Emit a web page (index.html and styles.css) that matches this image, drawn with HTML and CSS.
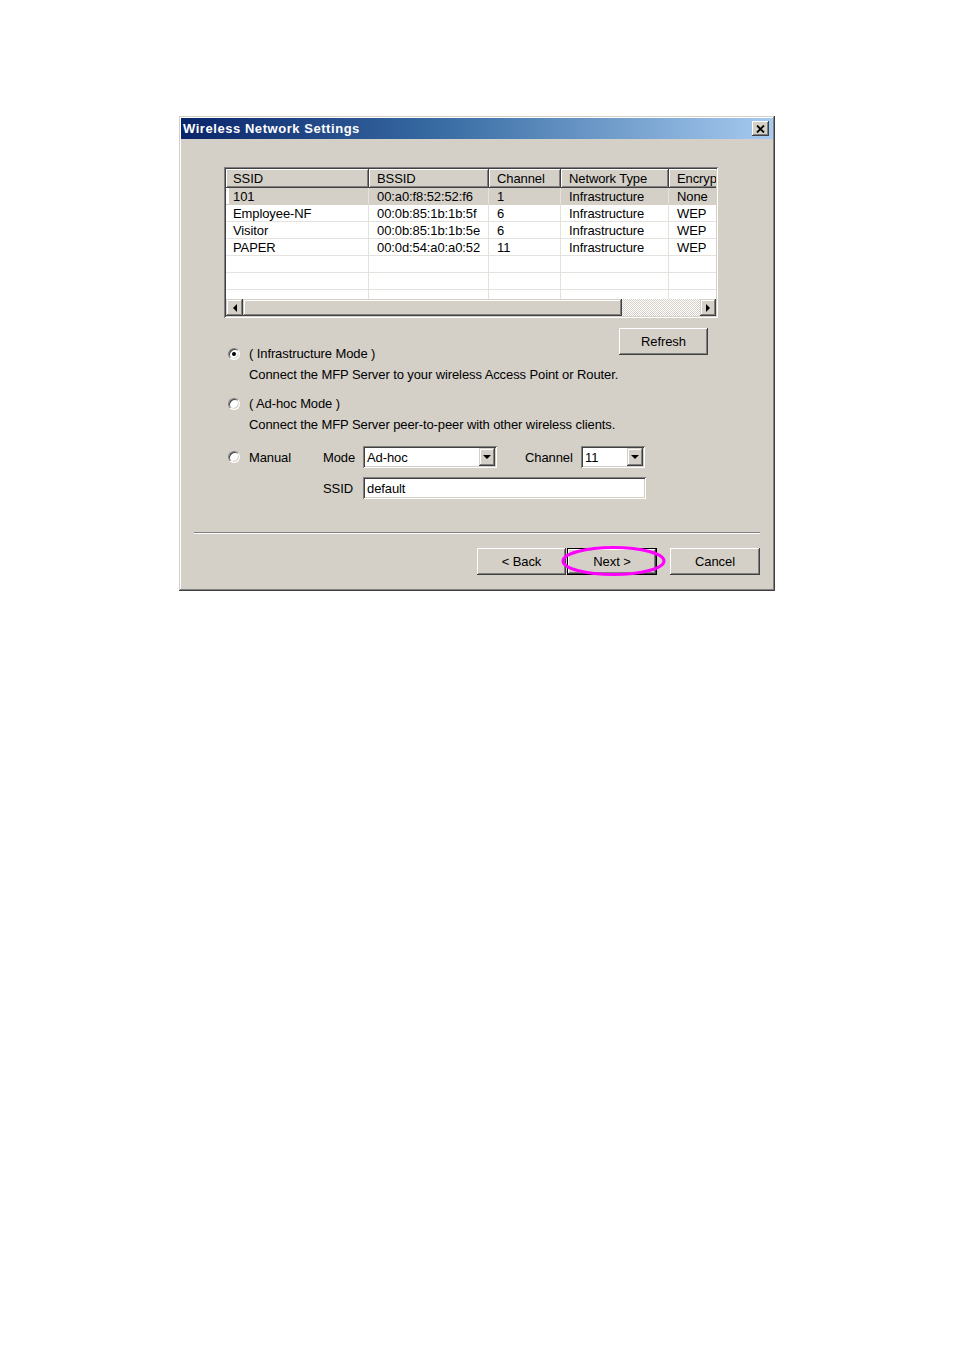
FILE: index.html
```html
<!DOCTYPE html>
<html>
<head>
<meta charset="utf-8">
<title>Wireless Network Settings</title>
<link rel="stylesheet" href="styles.css">
</head>
<body>
<div class="dialog">
  <div class="titlebar">
    <span class="title">Wireless Network Settings</span>
    <span class="close">
      <svg width="9" height="8" viewBox="0 0 9 8"><path d="M1 0.5 L8 7.5 M8 0.5 L1 7.5" stroke="#000" stroke-width="1.8" fill="none"/></svg>
    </span>
  </div>
  <div class="body">
    <div class="list">
      <div class="row head">
        <div class="c c1">SSID</div><div class="c c2">BSSID</div><div class="c c3">Channel</div><div class="c c4">Network Type</div><div class="c c5">Encryp</div>
      </div>
      <div class="rows">
        <div class="row sel"><div class="c c1">101</div><div class="c c2">00:a0:f8:52:52:f6</div><div class="c c3">1</div><div class="c c4">Infrastructure</div><div class="c c5">None</div></div>
        <div class="row"><div class="c c1">Employee-NF</div><div class="c c2">00:0b:85:1b:1b:5f</div><div class="c c3">6</div><div class="c c4">Infrastructure</div><div class="c c5">WEP</div></div>
        <div class="row"><div class="c c1">Visitor</div><div class="c c2">00:0b:85:1b:1b:5e</div><div class="c c3">6</div><div class="c c4">Infrastructure</div><div class="c c5">WEP</div></div>
        <div class="row"><div class="c c1">PAPER</div><div class="c c2">00:0d:54:a0:a0:52</div><div class="c c3">11</div><div class="c c4">Infrastructure</div><div class="c c5">WEP</div></div>
        <div class="row"><div class="c c1"></div><div class="c c2"></div><div class="c c3"></div><div class="c c4"></div><div class="c c5"></div></div>
        <div class="row"><div class="c c1"></div><div class="c c2"></div><div class="c c3"></div><div class="c c4"></div><div class="c c5"></div></div>
        <div class="row"><div class="c c1"></div><div class="c c2"></div><div class="c c3"></div><div class="c c4"></div><div class="c c5"></div></div>
      </div>
      <div class="hscroll">
        <div class="sbtn"><span class="tri-left"></span></div>
        <div class="thumb"></div>
        <div class="track"></div>
        <div class="sbtn"><span class="tri-right"></span></div>
      </div>
    </div>

    <div class="mid-row">
      <div class="opt first">
        <div class="radio-line"><span class="radio checked"></span><span>( Infrastructure Mode )</span></div>
        <div class="desc">Connect the MFP Server to your wireless Access Point or Router.</div>
      </div>
      <div class="btn refresh">Refresh</div>
    </div>

    <div class="opt second">
      <div class="radio-line"><span class="radio"></span><span>( Ad-hoc Mode )</span></div>
      <div class="desc">Connect the MFP Server peer-to-peer with other wireless clients.</div>
    </div>

    <div class="manual-row">
      <div class="radio-line manual"><span class="radio"></span><span>Manual</span></div>
      <span class="lbl">Mode</span>
      <div class="combo mode"><span class="val">Ad-hoc</span><span class="dd"><span class="tri-down"></span></span></div>
      <span class="lbl chan">Channel</span>
      <div class="combo chanbox"><span class="val">11</span><span class="dd"><span class="tri-down"></span></span></div>
    </div>
    <div class="ssid-row">
      <span class="lbl">SSID</span>
      <div class="input"><span class="val">default</span></div>
    </div>

    <div class="sep"></div>

    <div class="buttons">
      <div class="btn back">&lt; Back</div>
      <div class="btn next default">Next &gt;
        <svg class="circle" width="105" height="32" viewBox="0 0 105 32"><ellipse cx="52.5" cy="16" rx="50.5" ry="13.5" fill="none" stroke="#ff00ff" stroke-width="3"/></svg>
      </div>
      <div class="btn cancel">Cancel</div>
    </div>
  </div>
</div>
</body>
</html>
```

FILE: styles.css
```css
* { box-sizing: border-box; }
html, body { margin: 0; padding: 0; background: #fff; }
body {
  font-family: "Liberation Sans", Arial, sans-serif;
  font-size: 13px;
  letter-spacing: -0.1px;
  color: #000;
}
.dialog {
  width: 596px;
  height: 475px;
  margin: 116px 0 0 179px;
  padding: 2px;
  background: #d4d0c8;
  box-shadow: inset -1px -1px #404040, inset 1px 1px #d4d0c8, inset -2px -2px #808080, inset 2px 2px #ffffff;
}
.titlebar {
  height: 21px;
  background: linear-gradient(to right, #0a246a 0%, #3a6ea5 45%, #a6caf0 100%);
  display: flex;
  align-items: center;
  justify-content: space-between;
  padding: 0 4px 0 2px;
}
.title {
  color: #fff;
  font-weight: bold;
  font-size: 13px;
  letter-spacing: 0.55px;
  line-height: 21px;
}
.close {
  width: 17px;
  height: 15px;
  background: #d4d0c8;
  box-shadow: inset -1px -1px #404040, inset 1px 1px #ffffff, inset -2px -2px #808080;
  display: flex;
  align-items: center;
  justify-content: center;
}
.body {
  padding: 28px 0 0 43px;
}
.list {
  width: 494px;
  height: 151px;
  padding: 2px;
  background: #fff;
  box-shadow: inset 1px 1px #808080, inset -1px -1px #ffffff, inset 2px 2px #404040, inset -2px -2px #d4d0c8;
  display: flex;
  flex-direction: column;
  overflow: hidden;
}
.row {
  display: flex;
  height: 17px;
  line-height: 17px;
  white-space: nowrap;
  flex: none;
}
.c {
  flex: none;
  padding-left: 7px;
  overflow: hidden;
  border-right: 1px solid #e4e2dc;
  border-bottom: 1px solid #e4e2dc;
}
.c1 { width: 143px; }
.c2 { width: 120px; padding-left: 8px; }
.c3 { width: 72px; padding-left: 8px; }
.c4 { width: 108px; padding-left: 8px; }
.c5 { width: 60px; padding-left: 8px; border-right: none; }
.row.head { height: 19px; line-height: 20px; width: 490px; overflow: hidden; }
.row.head .c {
  background: #d4d0c8;
  border: none;
  box-shadow: inset -1px -1px #404040, inset 1px 1px #ffffff, inset -2px -2px #808080;
}
.rows { height: 111px; overflow: hidden; flex: none; }
.row.sel .c { background: #d4d0c8; border-bottom-color: #d4d0c8; }
.row.sel .c1 { box-shadow: inset 3px 0 #fff; }
.hscroll {
  height: 17px;
  display: flex;
  flex: none;
}
.sbtn {
  width: 17px;
  height: 17px;
  background: #d4d0c8;
  box-shadow: inset -1px -1px #404040, inset 1px 1px #d4d0c8, inset -2px -2px #808080, inset 2px 2px #ffffff;
  display: flex;
  align-items: center;
  justify-content: center;
  flex: none;
}
.sbtn:last-child { width: 16px; }
.thumb {
  width: 379px;
  height: 17px;
  background: #d4d0c8;
  box-shadow: inset -1px -1px #404040, inset 1px 1px #d4d0c8, inset -2px -2px #808080, inset 2px 2px #ffffff;
  flex: none;
}
.track {
  flex: 1;
  height: 17px;
  background: repeating-conic-gradient(#d4d0c8 0 25%, #ffffff 0 50%) 0 0 / 2px 2px;
}
.tri-left {
  width: 0; height: 0;
  border-top: 4px solid transparent;
  border-bottom: 4px solid transparent;
  border-right: 4px solid #000;
}
.tri-right {
  width: 0; height: 0;
  border-top: 4px solid transparent;
  border-bottom: 4px solid transparent;
  border-left: 4px solid #000;
}
.tri-down {
  width: 0; height: 0;
  border-left: 4px solid transparent;
  border-right: 4px solid transparent;
  border-top: 4px solid #000;
}
.mid-row {
  width: 484px;
  margin-top: 10px;
  display: flex;
  align-items: flex-start;
}
.btn {
  height: 27px;
  background: #d4d0c8;
  box-shadow: inset -1px -1px #404040, inset 1px 1px #ffffff, inset -2px -2px #808080;
  display: flex;
  align-items: center;
  justify-content: center;
  flex: none;
  position: relative;
}
.refresh { width: 89px; margin-left: auto; }
.opt { margin-left: 4px; }
.opt.first { padding-top: 17px; flex: 1; min-width: 0; }
.opt.second { margin-top: 12px; }
.radio-line {
  display: flex;
  align-items: center;
  height: 17px;
  line-height: 17px;
  white-space: nowrap;
}
.radio {
  width: 12px;
  height: 12px;
  border-radius: 50%;
  border: 1px solid;
  border-color: #808080 #ffffff #ffffff #808080;
  box-shadow: inset 1px 1px #404040, inset -1px -1px #d4d0c8;
  background: #fff;
  margin-right: 9px;
  position: relative;
  flex: none;
}
.radio.checked::after {
  content: "";
  position: absolute;
  left: 3px;
  top: 3px;
  width: 4px;
  height: 4px;
  border-radius: 50%;
  background: #000;
}
.desc {
  margin-left: 21px;
  margin-top: 4px;
  line-height: 17px;
  height: 17px;
  white-space: nowrap;
}
.manual-row {
  margin-top: 13px;
  margin-left: 4px;
  display: flex;
  align-items: center;
  height: 22px;
}
.radio-line.manual { width: 95px; }
.lbl { width: 40px; flex: none; }
.lbl.chan { width: 56px; margin-left: 28px; }
.combo, .input {
  height: 22px;
  background: #fff;
  box-shadow: inset 1px 1px #808080, inset -1px -1px #ffffff, inset 2px 2px #404040, inset -2px -2px #d4d0c8;
  display: flex;
  align-items: center;
  padding: 2px;
  flex: none;
}
.combo.mode { width: 134px; }
.combo.chanbox { width: 64px; }
.val { flex: 1; padding-left: 2px; line-height: 19px; height: 18px; }
.dd {
  width: 16px;
  height: 18px;
  background: #d4d0c8;
  box-shadow: inset -1px -1px #404040, inset 1px 1px #d4d0c8, inset -2px -2px #808080, inset 2px 2px #ffffff;
  display: flex;
  align-items: center;
  justify-content: center;
}
.ssid-row {
  margin-top: 9px;
  margin-left: 99px;
  display: flex;
  align-items: center;
}
.input { width: 283px; }
.sep {
  margin: 33px 13px 0 -30px;
  height: 2px;
  border-top: 1px solid #808080;
  border-bottom: 1px solid #ffffff;
}
.buttons {
  margin-top: 14px;
  margin-right: 13px;
  display: flex;
  justify-content: flex-end;
}
.back { width: 89px; }
.next { width: 90px; margin-left: 1px; }
.next.default {
  box-shadow: inset 1px 1px #000, inset -1px -1px #000, inset -2px -2px #404040, inset 2px 2px #ffffff, inset -3px -3px #808080;
}
.cancel { width: 90px; margin-left: 13px; }
.circle {
  position: absolute;
  left: -6px;
  top: -3px;
  pointer-events: none;
}
```
